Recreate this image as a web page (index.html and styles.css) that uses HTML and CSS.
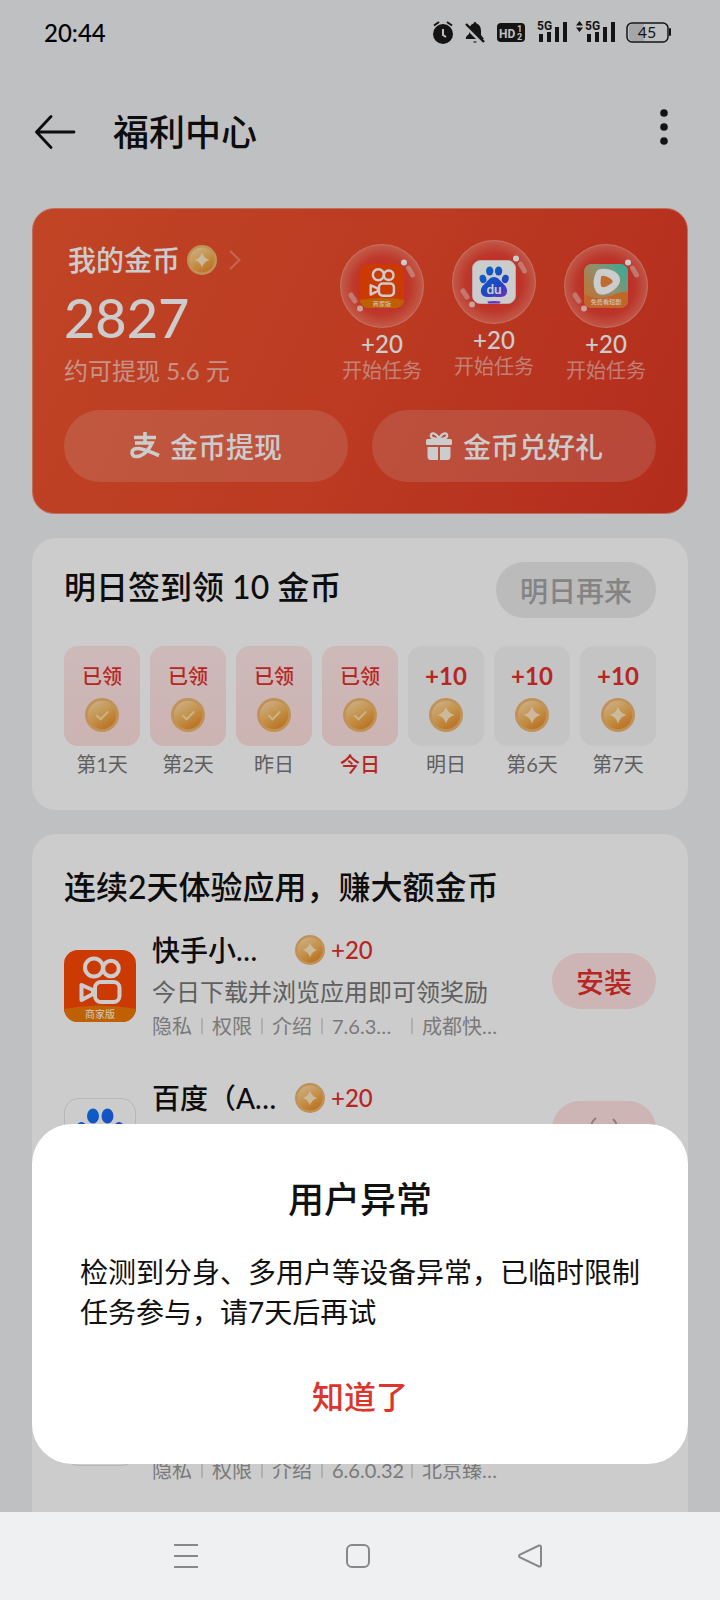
FILE: index.html
```html
<!DOCTYPE html>
<html lang="zh-CN">
<head>
    <meta charset="UTF-8">
    <meta name="viewport" content="width=device-width, initial-scale=1.0">
    <title>福利中心</title>
    <link rel="stylesheet" href="styles.css">
</head>
<body>
    <!-- shared icons -->
    <svg class="defs" width="0" height="0" aria-hidden="true">
        <defs>
            <linearGradient id="gold" x1="0.2" y1="0" x2="0.8" y2="1">
                <stop offset="0" stop-color="#ffdca8"/>
                <stop offset="0.5" stop-color="#f5b65c"/>
                <stop offset="1" stop-color="#e88a24"/>
            </linearGradient>
            <linearGradient id="baiduBlue" gradientUnits="userSpaceOnUse" x1="20" y1="10" x2="56" y2="66">
                <stop offset="0" stop-color="#0a7cf5"/>
                <stop offset="0.6" stop-color="#2a56f5"/>
                <stop offset="1" stop-color="#9a3cf0"/>
            </linearGradient>
            <linearGradient id="drama" x1="1" y1="0" x2="0" y2="0.8">
                <stop offset="0.1" stop-color="#4fd3b8"/>
                <stop offset="0.5" stop-color="#b4b487"/>
                <stop offset="1" stop-color="#f58a3c"/>
            </linearGradient>
        </defs>
        <symbol id="coin" viewBox="0 0 30 30">
            <circle cx="15" cy="15" r="15" fill="#f0b76e"/>
            <circle cx="15" cy="15" r="12.5" fill="url(#gold)"/>
            <path d="M15 7.5Q16.6 13.4 22.5 15Q16.6 16.6 15 22.5Q13.4 16.6 7.5 15Q13.4 13.4 15 7.5Z" fill="#ffe6c4"/>
        </symbol>
        <symbol id="coin-check" viewBox="0 0 30 30">
            <circle cx="15" cy="15" r="15" fill="#f0b76e"/>
            <circle cx="15" cy="15" r="12.5" fill="url(#gold)"/>
            <path d="M10 15.2L13.8 18.8L20.5 11.8" fill="none" stroke="#ffdfae" stroke-width="1.8"/>
        </symbol>
        <symbol id="kuaishou" viewBox="0 0 72 72">
            <rect width="72" height="72" rx="14" fill="#ff4906"/>
            <path d="M0 59Q36 52 72 59V60A14 14 0 0 1 58 72H14A14 14 0 0 1 0 60Z" fill="#f07806"/>
            <g fill="none" stroke="#fff" stroke-width="4" stroke-linejoin="round">
                <circle cx="30" cy="17.5" r="9"/>
                <circle cx="47" cy="18.5" r="7.8"/>
                <rect x="31" y="32" width="24.500" height="20" rx="6"/>
                <path d="M17.500 35V50L29 44V40Z"/>
            </g>
            <text x="36" y="68" class="logo-text">商家版</text>
        </symbol>
        <symbol id="baidu" viewBox="0 0 72 72">
            <rect x="0.5" y="0.5" width="71" height="71" rx="14" fill="#fff" stroke="#e4e4e4"/>
            <g fill="url(#baiduBlue)">
                <ellipse cx="29" cy="18" rx="6" ry="7.5"/>
                <ellipse cx="43.500" cy="18" rx="6" ry="7.5"/>
                <ellipse cx="18" cy="31" rx="5.500" ry="7" transform="rotate(-15 18 31)"/>
                <ellipse cx="54.500" cy="31" rx="5.500" ry="7" transform="rotate(15 54.500 31)"/>
                <path d="M36 28C42 28 45 33 49 37C54 42 59 46 57 54C55 61 48 61 36 60C24 61 17 61 15 54C13 46 18 42 23 37C27 33 30 28 36 28Z"/>
                <path d="M25 68Q36 66 47 68L45 71H27Z"/>
            </g>
            <text x="36" y="55" class="logo-du">du</text>
        </symbol>
        <symbol id="duanju" viewBox="0 0 72 72">
            <rect width="72" height="72" rx="12" fill="url(#drama)"/>
            <path d="M0 50Q24 60 44 52T72 46V60A12 12 0 0 1 60 72H12A12 12 0 0 1 0 60Z" fill="#f27f33"/>
            <path d="M20 13Q24 5 42 9Q59 14 59 27Q58 38 42 47Q26 54 20 46Q11 30 20 13Z" fill="#fff"/>
            <path d="M28 20Q34 17 46 26Q48 29 46 31Q36 38 31 38Q27 38 27 30Z" fill="#f0873c"/>
            <text x="36" y="66" class="logo-text">免费看短剧</text>
        </symbol>
        <symbol id="shine" viewBox="0 0 84 84">
            <path d="M68.500 24L72.500 31M11 51L15 57" stroke="#fff" stroke-opacity="0.4" stroke-width="5" stroke-linecap="round"/>
            <circle cx="64" cy="18.500" r="3" fill="#fff"/>
            <circle cx="20" cy="64.500" r="3" fill="#ffc8c3"/>
        </symbol>
    </svg>

    <main class="screen">
        <div class="status-bar">
            <span class="time">20:44</span>
            <div class="status-icons">
                <svg width="20" height="24" viewBox="0 0 20 24">
                    <circle cx="10" cy="14" r="10"/>
                    <path d="M1 5.500L6 2M19 5.500L14 2" stroke="#1a1a1a" stroke-width="2"/>
                    <path d="M10 9V15L13 17" fill="none" stroke="#eff0f2" stroke-width="2"/>
                </svg>
                <svg width="20" height="24" viewBox="0 0 20 24">
                    <path d="M8.500 3.500Q10 0 11.500 3.500Q16 5 16 11V15L19 19H1Q0 17 4 14V11Q4 5 8.500 3.500Z"/>
                    <path d="M8 21.500H12Q10 24 8 21.500Z"/>
                    <path d="M0 5.500L19 24" stroke="#eff0f2" stroke-width="4"/>
                    <path d="M1 4L19 22" stroke="#1a1a1a" stroke-width="2.400"/>
                </svg>
                <svg width="28" height="24" viewBox="0 0 28 24">
                    <rect y="3" width="28" height="19" rx="4"/>
                    <text x="2" y="17.500" class="hd">HD</text>
                    <text x="20" y="12" class="hd-num">1</text>
                    <text x="20" y="20" class="hd-num">2</text>
                </svg>
                <svg class="signal" width="31" height="24" viewBox="0 0 31 24">
                    <text x="0" y="10" class="net">5G</text>
                    <path d="M2 14H6V22H2ZM10 12H14V22H10ZM18 7H22V22H18ZM26 2H30V22H26Z"/>
                </svg>
                <svg width="40" height="24" viewBox="0 0 40 24">
                    <path d="M0 5.500L3.500 1L7 5.500ZM0 7.500L3.500 12L7 7.500Z"/>
                    <text x="9" y="10" class="net">5G</text>
                    <path d="M11 14H15V22H11ZM19 12H23V22H19ZM27 7H31V22H27ZM35 2H39V22H35Z"/>
                </svg>
                <svg class="battery" width="46" height="24" viewBox="0 0 46 24">
                    <path d="M7 4H18V21H7Q3 21 3 17V8Q3 4 7 4Z" fill="#cfd0d2"/>
                    <rect x="1" y="3" width="41" height="19" rx="5" fill="none" stroke="#1a1a1a" stroke-width="1.500"/>
                    <rect x="43" y="8" width="2" height="8" rx="1"/>
                    <text x="21" y="18" class="level">45</text>
                </svg>
            </div>
        </div>

        <header class="header">
            <button class="icon-btn" aria-label="返回">
                <svg width="42" height="34" viewBox="0 0 42 34">
                    <path d="M16 1.500L1.500 17L16 32.500M2 17H39" fill="none" stroke="#111" stroke-width="2.800" stroke-linecap="round" stroke-linejoin="round"/>
                </svg>
            </button>
            <h1>福利中心</h1>
            <button class="icon-btn more" aria-label="更多">
                <svg width="24" height="38" viewBox="0 0 24 38" fill="#1a1a1a">
                    <circle cx="12" cy="5" r="3.800"/>
                    <circle cx="12" cy="19" r="3.800"/>
                    <circle cx="12" cy="33" r="3.800"/>
                </svg>
            </button>
        </header>

        <div class="content">
            <section class="wallet">
                <div class="wallet-top">
                    <div class="balance">
                        <a href="#" class="balance-label">
                            <span>我的金币</span>
                            <svg width="30" height="30"><use href="#coin"/></svg>
                            <svg width="12" height="20" viewBox="0 0 12 20"><path d="M1 1L10.500 10L1 19" fill="none" stroke="#fff" stroke-opacity="0.3" stroke-width="2"/></svg>
                        </a>
                        <p class="amount">2827</p>
                        <p class="cash">约可提现 5.6 元</p>
                    </div>
                    <div class="bubbles">
                        <a href="#" class="bubble low">
                            <span class="ball"><svg width="44" height="44"><use href="#kuaishou"/></svg><svg class="shine" width="84" height="84"><use href="#shine"/></svg></span>
                            <span class="plus">+20</span>
                            <span class="start">开始任务</span>
                        </a>
                        <a href="#" class="bubble">
                            <span class="ball"><svg width="44" height="44"><use href="#baidu"/></svg><svg class="shine" width="84" height="84"><use href="#shine"/></svg></span>
                            <span class="plus">+20</span>
                            <span class="start">开始任务</span>
                        </a>
                        <a href="#" class="bubble low">
                            <span class="ball"><svg width="44" height="44"><use href="#duanju"/></svg><svg class="shine" width="84" height="84"><use href="#shine"/></svg></span>
                            <span class="plus">+20</span>
                            <span class="start">开始任务</span>
                        </a>
                    </div>
                </div>
                <div class="wallet-actions">
                    <button class="wallet-btn">
                        <svg width="30" height="30" viewBox="0 0 30 30" fill="none" stroke="#fff" stroke-width="3.600">
                            <path d="M4 6.500H26M15 1V12M5 12H22Q18 21 11 24.500Q3 27.500 2 22Q2 17 9 17.500Q17 19 29 24.500"/>
                        </svg>
                        金币提现
                    </button>
                    <button class="wallet-btn">
                        <svg width="28" height="30" viewBox="0 0 28 30" fill="#fff">
                            <path d="M14 8C11 1 5 1 6 5.500Q7 8 14 8C17 1 23 1 22 5.500Q21 8 14 8Z" fill="none" stroke="#fff" stroke-width="2.400"/>
                            <rect x="1" y="8" width="26" height="6" rx="1.500"/>
                            <path d="M2.500 16H13V29H6Q2.500 29 2.500 25.500ZM15 16H25.500V25.500Q25.500 29 22 29H15Z"/>
                        </svg>
                        金币兑好礼
                    </button>
                </div>
            </section>

            <section class="card checkin">
                <div class="checkin-head">
                    <h2>明日签到领 10 金币</h2>
                    <button class="pill pill-gray" disabled>明日再来</button>
                </div>
                <ul class="days">
                    <li>
                        <div class="day done"><span>已领</span><svg width="34" height="34"><use href="#coin-check"/></svg></div>
                        <p>第1天</p>
                    </li>
                    <li>
                        <div class="day done"><span>已领</span><svg width="34" height="34"><use href="#coin-check"/></svg></div>
                        <p>第2天</p>
                    </li>
                    <li>
                        <div class="day done"><span>已领</span><svg width="34" height="34"><use href="#coin-check"/></svg></div>
                        <p>昨日</p>
                    </li>
                    <li class="today">
                        <div class="day done"><span>已领</span><svg width="34" height="34"><use href="#coin-check"/></svg></div>
                        <p>今日</p>
                    </li>
                    <li>
                        <div class="day"><span>+10</span><svg width="34" height="34"><use href="#coin"/></svg></div>
                        <p>明日</p>
                    </li>
                    <li>
                        <div class="day"><span>+10</span><svg width="34" height="34"><use href="#coin"/></svg></div>
                        <p>第6天</p>
                    </li>
                    <li>
                        <div class="day"><span>+10</span><svg width="34" height="34"><use href="#coin"/></svg></div>
                        <p>第7天</p>
                    </li>
                </ul>
            </section>

            <section class="card apps">
                <h2>连续2天体验应用，赚大额金币</h2>
                <ul class="app-list">
                    <li class="app">
                        <svg class="app-icon" width="72" height="72"><use href="#kuaishou"/></svg>
                        <div class="app-info">
                            <div class="app-title">
                                <h3>快手小…</h3>
                                <svg width="30" height="30"><use href="#coin"/></svg>
                                <span>+20</span>
                            </div>
                            <p class="app-desc">今日下载并浏览应用即可领奖励</p>
                            <div class="app-meta"><a href="#">隐私</a><a href="#">权限</a><a href="#">介绍</a><span class="ver">7.6.3…</span><span>成都快…</span></div>
                        </div>
                        <button class="pill pill-red">安装</button>
                    </li>
                    <li class="app">
                        <svg class="app-icon" width="72" height="72"><use href="#baidu"/></svg>
                        <div class="app-info">
                            <div class="app-title">
                                <h3>百度（A…</h3>
                                <svg width="30" height="30"><use href="#coin"/></svg>
                                <span>+20</span>
                            </div>
                        </div>
                        <button class="pill pill-red" aria-label="加载中">
                            <svg width="32" height="32" viewBox="0 0 32 32" fill="none" stroke="#b89a98" stroke-width="2">
                                <path d="M8 5A14 14 0 0 0 8 27M25 6A14 14 0 0 1 25 26"/>
                            </svg>
                        </button>
                    </li>
                    <li class="app">
                        <svg class="app-icon" width="72" height="72"><use href="#duanju"/></svg>
                    </li>
                    <li class="app">
                        <span class="app-icon blank"></span>
                        <div class="app-info app-info-end">
                            <div class="app-meta"><a href="#">隐私</a><a href="#">权限</a><a href="#">介绍</a><span class="ver">6.6.0.32</span><span>北京臻…</span></div>
                        </div>
                    </li>
                </ul>
            </section>
        </div>

        <div class="overlay">
            <div class="dialog" role="dialog" aria-labelledby="dialogTitle">
                <h2 id="dialogTitle">用户异常</h2>
                <p>检测到分身、多用户等设备异常，已临时限制任务参与，请7天后再试</p>
                <button class="dialog-btn">知道了</button>
            </div>
        </div>
    </main>

    <nav class="nav-bar">
        <button class="icon-btn" aria-label="多任务">
            <svg width="26" height="26" viewBox="0 0 26 26"><path d="M1 2H25M1 13H25M1 24H25"/></svg>
        </button>
        <button class="icon-btn" aria-label="主页">
            <svg width="26" height="26" viewBox="0 0 26 26"><rect x="2" y="2" width="22" height="22" rx="5"/></svg>
        </button>
        <button class="icon-btn" aria-label="返回">
            <svg width="26" height="26" viewBox="0 0 26 26"><path d="M22 2.500L3 11.500Q1 13 3 14.500L22 23.500Q24 24 24 21.500V4.500Q24 2 22 2.500Z"/></svg>
        </button>
    </nav>
</body>
</html>
```
FILE: styles.css
```css
*{
    margin: 0;
    padding: 0;
    box-sizing: border-box;
}
body{
    height: 100vh;
    display: flex;
    flex-direction: column;
    background: #eff0f2;
    color: #111;
    font-family: Lato, "Noto Sans CJK SC", sans-serif;
}
ul{
    list-style: none;
}
a{
    color: inherit;
    text-decoration: none;
}
h1, h2, h3{
    font-weight: 500;
}
button{
    border: none;
    background: none;
    font-family: inherit;
    font-weight: 500;
    cursor: pointer;
}
svg{
    display: block;
    flex-shrink: 0;
}
.defs{
    position: absolute;
}
.logo-text{
    font-size: 10px;
    fill: #fff;
    text-anchor: middle;
}
.logo-du{
    font-size: 22px;
    font-weight: 700;
    fill: #fff;
    text-anchor: middle;
}
.screen{
    flex: 1;
    min-height: 0;
    position: relative;
    overflow: hidden;
}

/* status bar */
.status-bar{
    height: 64px;
    padding: 0 48px 0 44px;
    display: flex;
    align-items: center;
    justify-content: space-between;
}
.time{
    font-size: 24px;
    font-weight: 500;
    color: #000;
}
.status-icons{
    display: flex;
    gap: 12px;
    fill: #1a1a1a;
}
.signal{
    margin-right: -4px;
}
.battery{
    margin-left: -2px;
}
.hd{
    font: 700 12px Roboto, sans-serif;
    fill: #eff0f2;
}
.hd-num{
    font: 700 9px Roboto, sans-serif;
    fill: #eff0f2;
}
.net{
    font: 700 12px Roboto, sans-serif;
}
.level{
    font-size: 16px;
    text-anchor: middle;
}

/* header */
.header{
    padding: 28px 44px 36px 35px;
    height: 144px;
    display: flex;
    align-items: center;
}
.header h1{
    flex: 1;
    margin-left: 36px;
    font-size: 36px;
    line-height: 80px;
}
.more{
    padding-bottom: 10px;
}

/* wallet */
.content{
    padding: 0 32px;
    display: flex;
    flex-direction: column;
    gap: 24px;
}
.wallet{
    padding: 31px;
    border: 1px solid #f48a72;
    border-radius: 22px;
    background: linear-gradient(115deg, #f0562f 0%, #eb4a2b 50%, #e03824 100%);
    color: #fff;
}
.wallet-top{
    display: flex;
    justify-content: space-between;
    margin-bottom: 24px;
}
.balance-label{
    display: flex;
    align-items: center;
    padding-left: 4px;
    font-size: 28px;
    font-weight: 500;
    line-height: 40px;
}
.balance-label svg{
    margin-left: 7px;
}
.balance-label svg + svg{
    margin-left: 12px;
}
.amount{
    font-size: 54px;
    font-weight: 500;
    line-height: 76px;
}
.cash{
    font-size: 24px;
    line-height: 30px;
    color: rgba(255, 255, 255, 0.6);
}
.bubbles{
    display: flex;
    gap: 28px;
    padding-right: 8px;
}
.bubble{
    width: 84px;
    text-align: center;
}
.low{
    padding-top: 4px;
}
.ball{
    position: relative;
    height: 84px;
    display: flex;
    align-items: center;
    justify-content: center;
    border: 1px solid rgba(255, 190, 180, 0.4);
    border-radius: 50%;
    background: radial-gradient(closest-side, rgba(255, 50, 60, 0.6) 50%, rgba(240, 70, 65, 0.5) 70%, rgba(255, 160, 150, 0.45) 100%);
}
.shine{
    position: absolute;
    top: -1px;
    left: -1px;
}
.plus{
    display: block;
    font-size: 24px;
    font-weight: 500;
    line-height: 32px;
}
.start{
    display: block;
    font-size: 20px;
    line-height: 20px;
    color: rgba(255, 255, 255, 0.5);
}
.wallet-actions{
    display: flex;
    gap: 24px;
}
.wallet-btn{
    flex: 1;
    height: 72px;
    display: flex;
    align-items: center;
    justify-content: center;
    gap: 10px;
    border-radius: 36px;
    background: rgba(255, 255, 255, 0.16);
    color: #fff;
    font-size: 28px;
}

/* cards */
.card{
    padding: 32px;
    border-radius: 24px;
    background: #fff;
}
.card h2{
    font-size: 32px;
    line-height: 42px;
}
.pill{
    height: 56px;
    display: flex;
    align-items: center;
    justify-content: center;
    border-radius: 28px;
    font-size: 28px;
    flex-shrink: 0;
}
.pill-gray{
    width: 160px;
    background: #eaeaea;
    color: #a6a6a6;
}
.pill-red{
    width: 104px;
    background: #ffe3e1;
    color: #e6302c;
}
.checkin{
    padding-top: 24px;
}
.checkin-head{
    display: flex;
    align-items: center;
    justify-content: space-between;
    margin-bottom: 28px;
}
.checkin-head h2{
    padding-bottom: 6px;
}
.days{
    display: grid;
    grid-template-columns: repeat(7, 1fr);
    gap: 10px;
    text-align: center;
}
.day{
    height: 100px;
    padding-top: 16px;
    display: flex;
    flex-direction: column;
    align-items: center;
    gap: 8px;
    border-radius: 14px;
    background: #f6f6f6;
    color: #e6302c;
    font-size: 24px;
    font-weight: 700;
    line-height: 28px;
}
.done{
    background: linear-gradient(#ffe9e8, #ffe0df);
    font-size: 20px;
    font-weight: 500;
}
.days p{
    margin-top: 4px;
    font-size: 20px;
    line-height: 28px;
    color: #777;
}
.days .today p{
    color: #e6302c;
    font-weight: 500;
}

/* app list */
.apps{
    padding-bottom: 64px;
}
.app-list{
    margin-top: 22px;
    display: flex;
    flex-direction: column;
    gap: 40px;
}
.app{
    min-height: 108px;
    display: flex;
    align-items: flex-start;
    gap: 16px;
}
.app-icon{
    margin-top: 20px;
}
.blank{
    width: 72px;
    height: 72px;
    border: 1px solid #e4e4e4;
    border-radius: 14px;
}
.app-info{
    flex: 1;
    min-width: 0;
}
.app-info-end{
    align-self: flex-end;
}
.app-title{
    display: flex;
    align-items: center;
    line-height: 40px;
}
.app-title h3{
    width: 131px;
    margin-right: 12px;
    font-size: 28px;
    white-space: nowrap;
}
.app-title span{
    margin-left: 6px;
    font-size: 24px;
    font-weight: 500;
    color: #e6302c;
}
.app-desc{
    font-size: 24px;
    line-height: 44px;
    color: #777;
}
.app-meta{
    display: flex;
    align-items: center;
    font-size: 20px;
    line-height: 24px;
    color: #999;
}
.app-meta > * + *{
    display: flex;
    align-items: center;
}
.app-meta > * + *::before{
    content: "";
    flex-shrink: 0;
    width: 2px;
    height: 16px;
    margin: 0 9px;
    background: #ddd;
}
.app-meta .ver{
    width: 90px;
}
.app .pill{
    margin-top: 23px;
}

/* dialog */
.overlay{
    position: absolute;
    inset: 0;
    padding: 0 32px 48px;
    display: flex;
    align-items: flex-end;
    background: rgba(0, 0, 0, 0.2);
}
.dialog{
    flex: 1;
    padding: 51px 48px 41px;
    border-radius: 40px;
    background: #fff;
    text-align: center;
}
.dialog h2{
    font-size: 36px;
    line-height: 48px;
}
.dialog p{
    margin: 29px 0 35px;
    font-size: 28px;
    line-height: 40px;
    text-align: left;
}
.dialog-btn{
    width: 100%;
    height: 56px;
    font-size: 32px;
    color: #dc352b;
}

/* navigation bar */
.nav-bar{
    height: 88px;
    padding-right: 4px;
    display: flex;
    align-items: center;
    justify-content: center;
    gap: 146px;
}
.nav-bar svg{
    fill: none;
    stroke: #888;
    stroke-width: 2;
}
```
